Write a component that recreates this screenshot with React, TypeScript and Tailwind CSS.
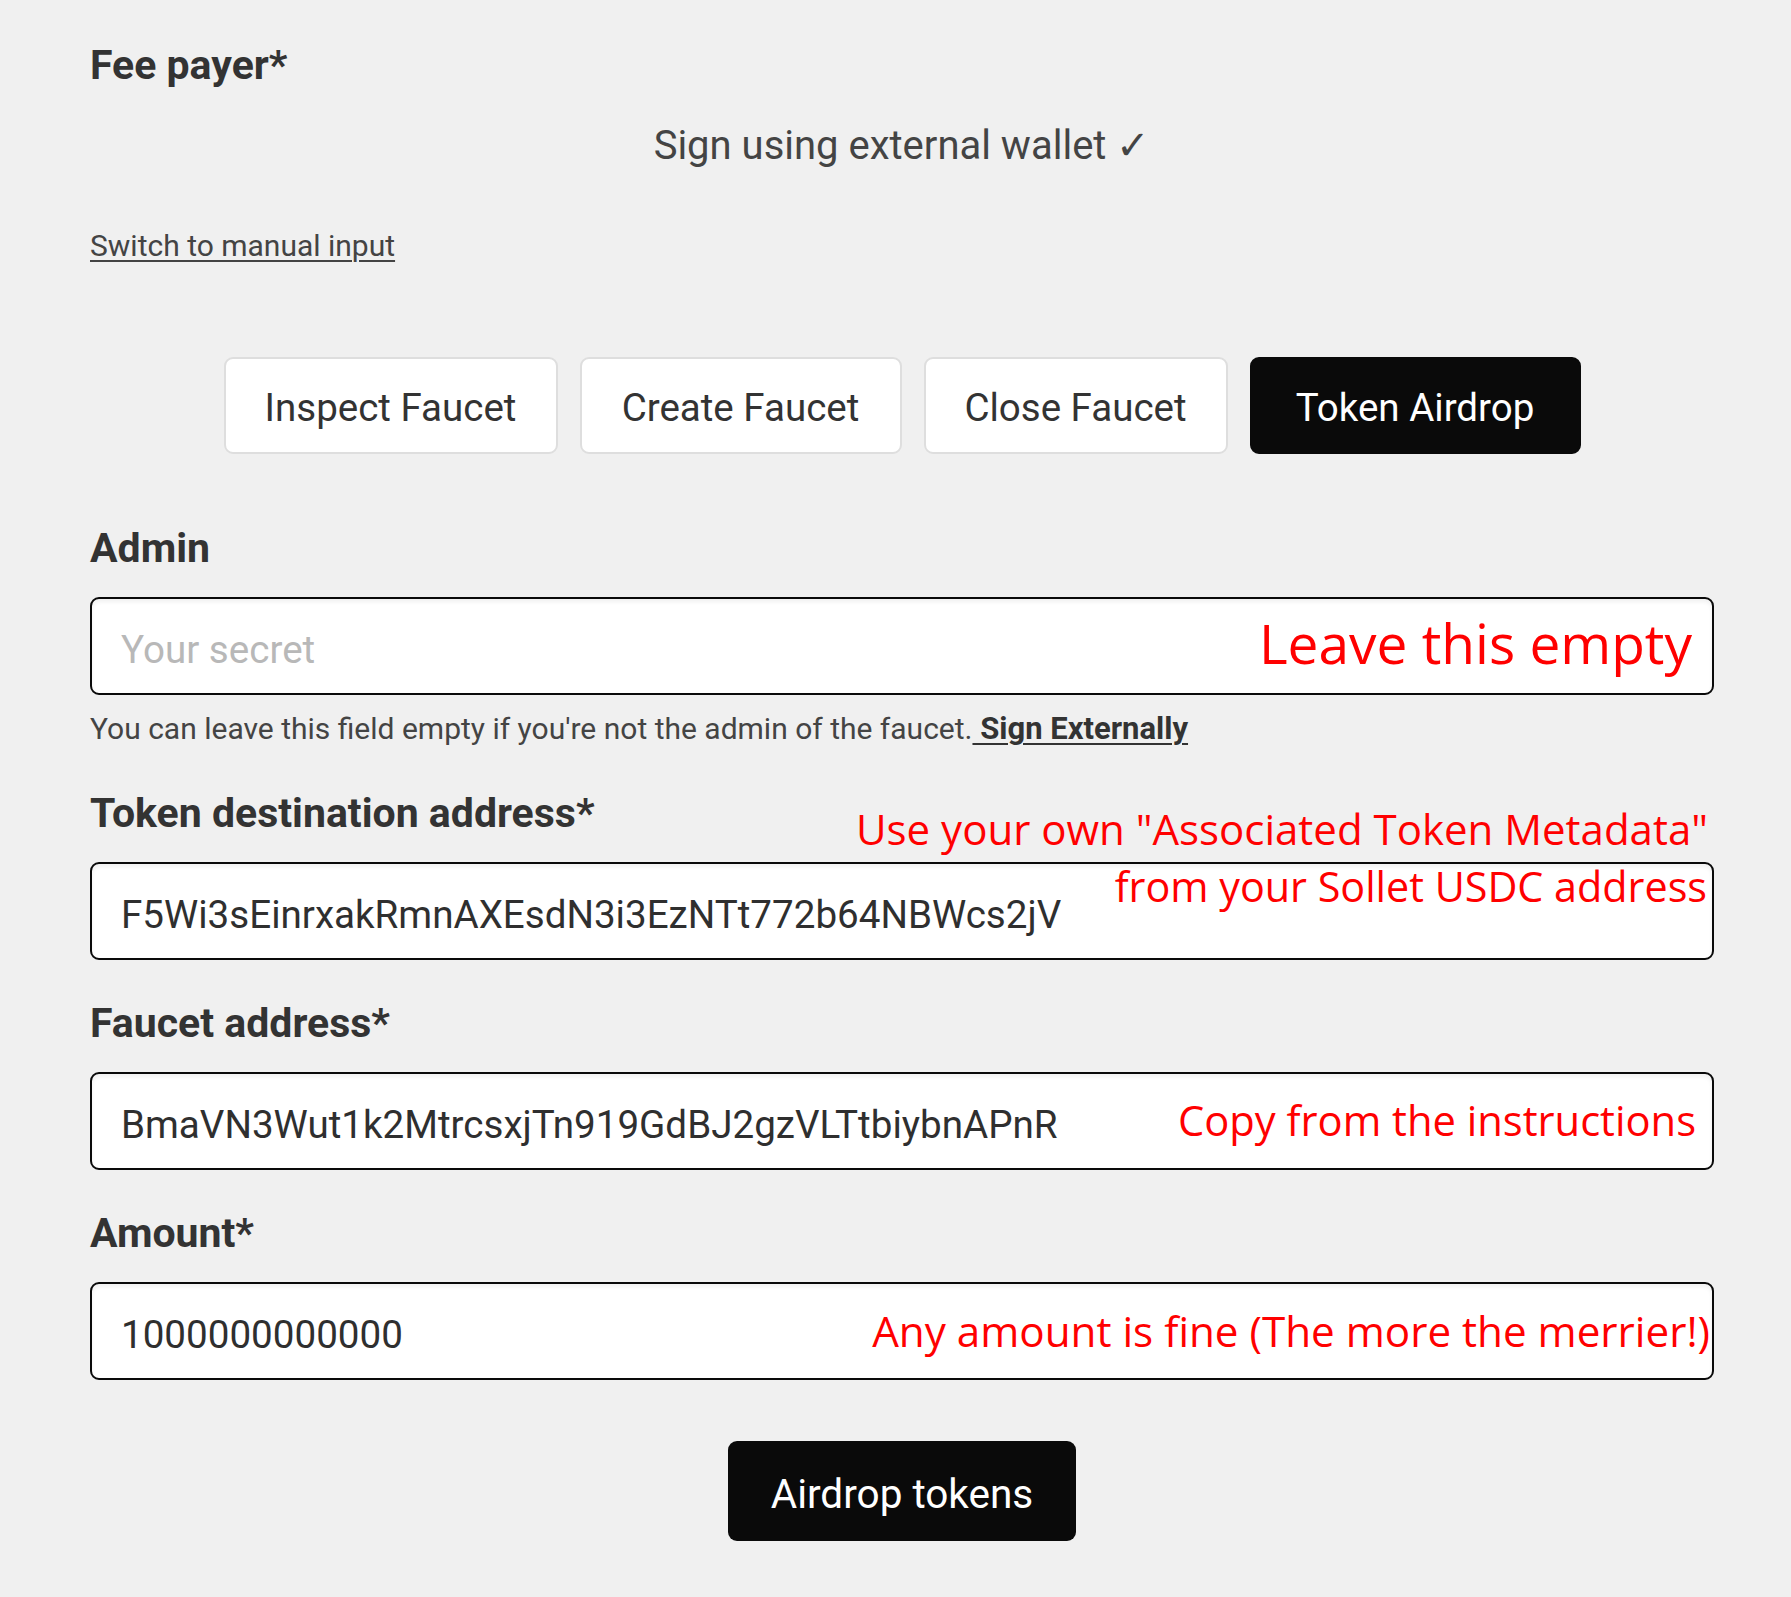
import React from "react";

const label = "block text-[41px] leading-[48px] font-bold text-[#333333]";
const inputCls =
  "block w-full h-[98px] rounded-[9px] border-2 border-[#0a0a0a] bg-white pl-[29px] pr-4 pt-[7px] text-[38.6px] text-[#2f2f2f] outline-none shadow-[inset_0_3px_4px_rgba(0,0,0,0.06)] placeholder:text-[#b8b8b8]";
const red =
  "pointer-events-none absolute whitespace-nowrap font-['Open_Sans',_'Noto_Sans',_sans-serif] text-[#ff0000] leading-none";

function Tab({ children, active, w }: { children: React.ReactNode; active?: boolean; w: string }) {
  return (
    <button
      className={
        active
          ? `h-[97px] ${w} rounded-[9px] border-2 border-[#0a0a0a] bg-[#0a0a0a] pt-[6px] text-[38.5px] leading-none text-white`
          : `h-[97px] ${w} rounded-[9px] border-2 border-[#dedede] bg-white pt-[6px] text-[38.5px] leading-none text-[#333333]`
      }
    >
      {children}
    </button>
  );
}

export default function App() {
  return (
    <div className="min-h-[1597px] w-full bg-[#f0f0f0] font-['Roboto',_'Liberation_Sans',_sans-serif] text-[#444444]">
      <div className="ml-[90px] w-[1624px] pt-[41px] pb-[56px]">
        <h2 className={label}>Fee payer*</h2>
        <p className="mt-[33px] text-center text-[40px] leading-[48px] text-[#444444]">
          Sign using external wallet ✓
        </p>
        <a
          href="#"
          className="mt-[58px] block w-fit text-[30px] leading-[36px] text-[#444444] underline decoration-2 underline-offset-[4px]"
        >
          Switch to manual input
        </a>

        <div className="mt-[93px] flex justify-center gap-[22px]">
          <Tab w="w-[334px]">Inspect Faucet</Tab>
          <Tab w="w-[322px]">Create Faucet</Tab>
          <Tab w="w-[304px]">Close Faucet</Tab>
          <Tab w="w-[331px]" active>
            Token Airdrop
          </Tab>
        </div>

        <label className={`${label} mt-[70px]`}>Admin</label>
        <div className="relative mt-[25px]">
          <input className={inputCls} placeholder="Your secret" readOnly />
          <span className={`${red} right-[22px] top-[18px] text-[55px]`}>Leave this empty</span>
        </div>
        <p className="mt-[16px] text-[30px] leading-[36px] text-[#444444]">
          You can leave this field empty if you're not the admin of the faucet.
          <a href="#" className="text-[31px] font-bold text-[#333333] underline decoration-2 underline-offset-[4px]">
            {" Sign Externally"}
          </a>
        </p>

        <label className={`${label} mt-[42px]`}>Token destination address*</label>
        <div className="relative mt-[25px]">
          <input className={inputCls} defaultValue="F5Wi3sEinrxakRmnAXEsdN3i3EzNTt772b64NBWcs2jV" readOnly />
          <span className={`${red} right-[6px] top-[-54px] text-[42px]`}>
            Use your own "Associated Token Metadata"
          </span>
          <span className={`${red} right-[7px] top-[4px] text-[41.3px]`}>from your Sollet USDC address</span>
        </div>

        <label className={`${label} mt-[39px]`}>Faucet address*</label>
        <div className="relative mt-[25px]">
          <input className={inputCls} defaultValue="BmaVN3Wut1k2MtrcsxjTn919GdBJ2gzVLTtbiybnAPnR" readOnly />
          <span className={`${red} right-[18px] top-[27px] text-[41.7px]`}>Copy from the instructions</span>
        </div>

        <label className={`${label} mt-[39px]`}>Amount*</label>
        <div className="relative mt-[25px]">
          <input className={inputCls} defaultValue="1000000000000" readOnly />
          <span className={`${red} right-[4px] top-[28px] text-[42.2px]`}>
            Any amount is fine (The more the merrier!)
          </span>
        </div>

        <div className="mt-[61px] flex justify-center">
          <button className="h-[100px] w-[348px] rounded-[9px] bg-[#0a0a0a] pt-[6px] text-[40.5px] leading-none text-white">
            Airdrop tokens
          </button>
        </div>
      </div>
    </div>
  );
}
